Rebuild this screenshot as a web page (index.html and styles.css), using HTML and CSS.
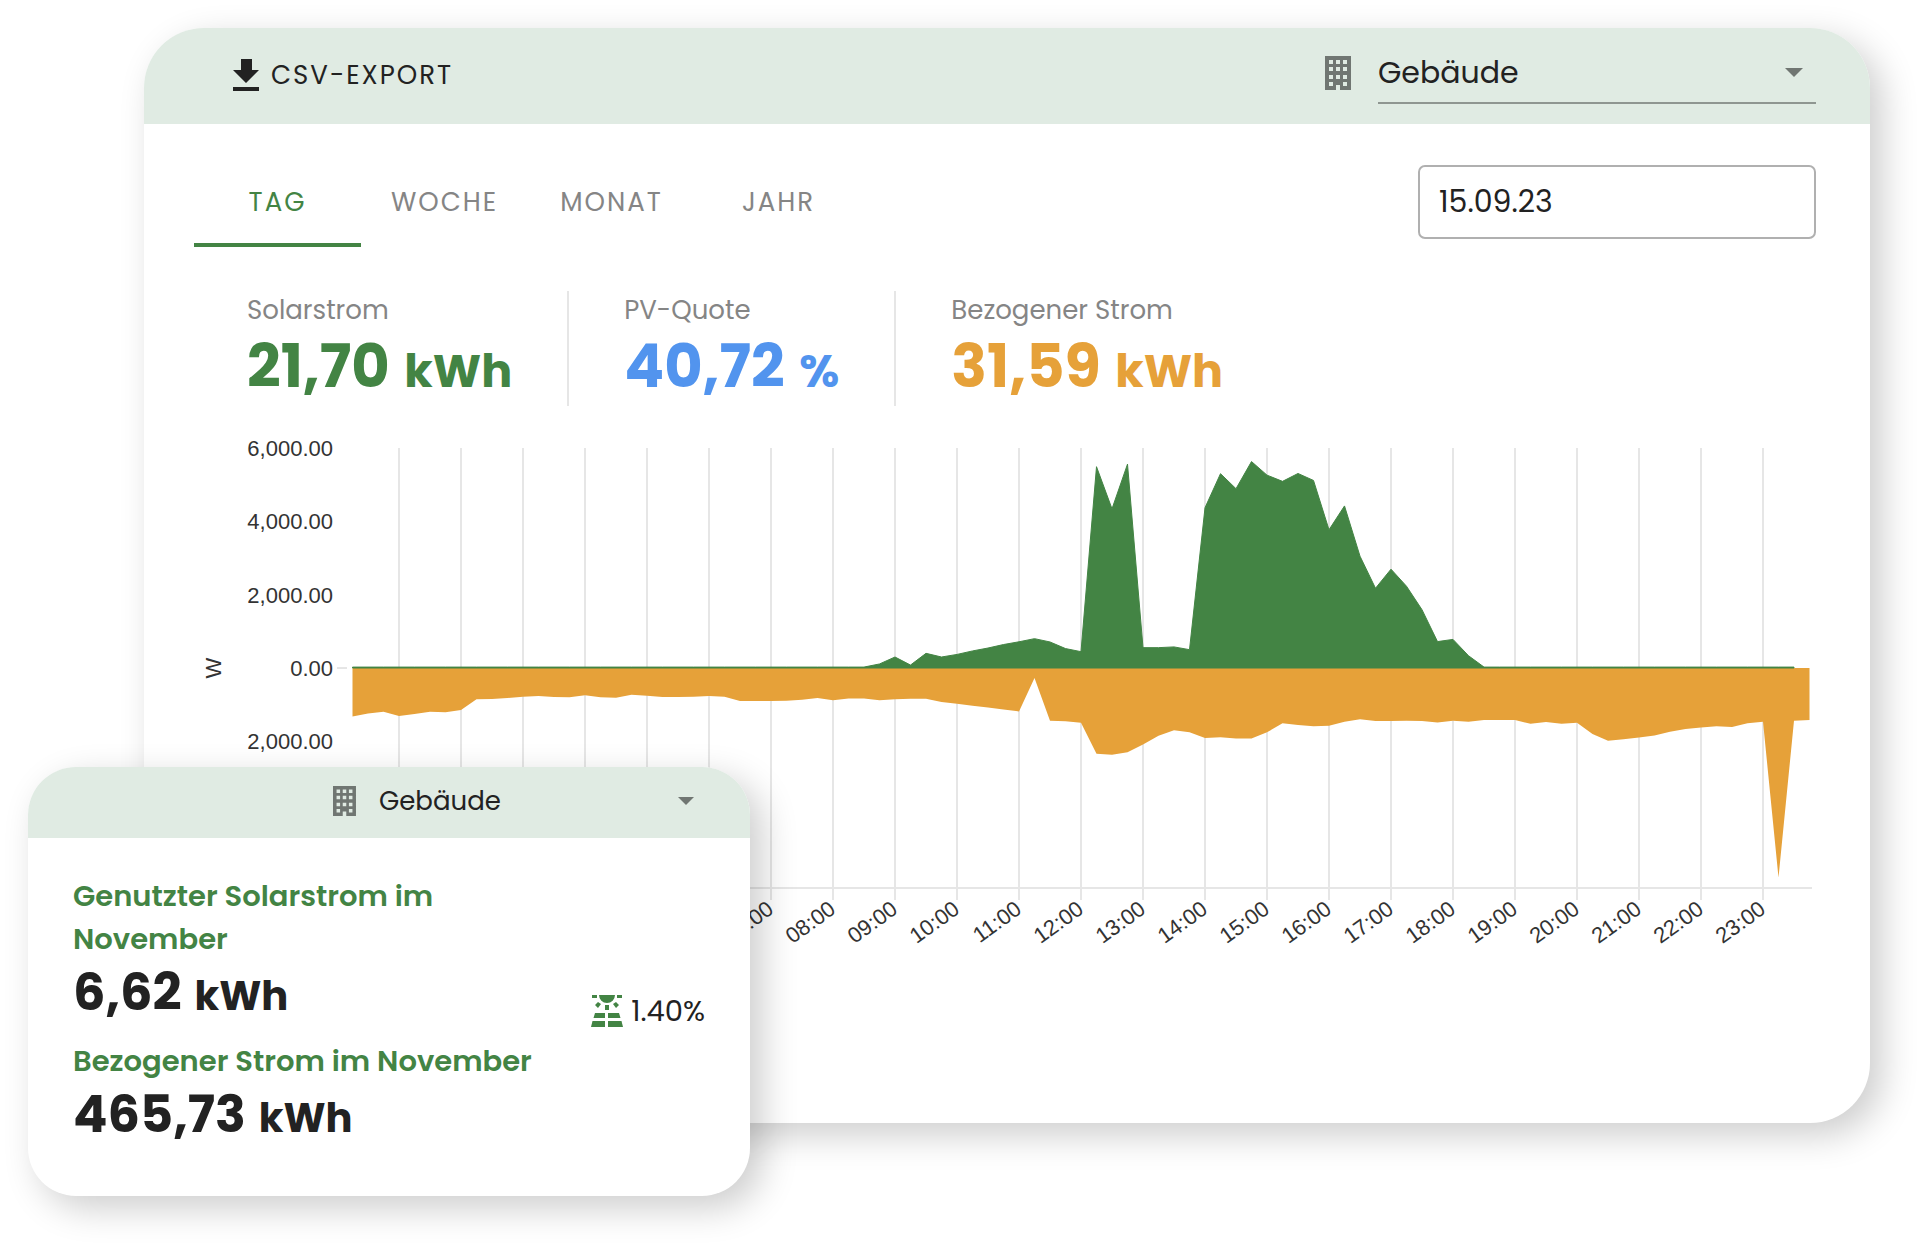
FILE: index.html
```html
<!DOCTYPE html>
<html lang="de">
<head>
  <meta charset="UTF-8" />
  <meta name="viewport" content="width=device-width, initial-scale=1.0" />
  <title>Stromverbrauch</title>
  <link rel="stylesheet" href="styles.css">
</head>
<body>
  <!-- shared icon shapes -->
  <svg class="icon-defs" aria-hidden="true">
    <symbol id="icon-building" viewBox="0 0 26 34">
      <path fill-rule="evenodd" d="M0 0h26v34H15v-5h-4v5H0zM4 4v4h4V4zm7 0v4h4V4zm7 0v4h4V4zM4 11v4h4v-4zm7 0v4h4v-4zm7 0v4h4v-4zM4 19v4h4v-4zm7 0v4h4v-4zm7 0v4h4v-4zM4 26v4h4v-4zm14 0v4h4v-4z" />
    </symbol>
  </svg>

  <main class="stage">
    <section class="card">
      <header class="card-header">
        <button class="export-btn" type="button">
          <svg class="icon-download" viewBox="0 0 26 32" aria-hidden="true">
            <path d="M8 0h11v11h7L13 24 0 11h8zM0 28h26v4H0z" />
          </svg>
          CSV-EXPORT
        </button>

        <div class="picker">
          <svg class="icon-building" aria-hidden="true"><use href="#icon-building" /></svg>
          <div class="select-wrap underlined">
            <select id="building" aria-label="Gebäude">
              <option>Gebäude</option>
            </select>
            <svg class="caret" viewBox="0 0 18 9" aria-hidden="true"><path d="M0 0h18L9 9z" /></svg>
          </div>
        </div>
      </header>

      <div class="card-body">
        <div class="toolbar">
          <div class="tabs" role="tablist">
            <button class="tab active" type="button" role="tab" aria-selected="true">TAG</button>
            <button class="tab" type="button" role="tab" aria-selected="false">WOCHE</button>
            <button class="tab" type="button" role="tab" aria-selected="false">MONAT</button>
            <button class="tab" type="button" role="tab" aria-selected="false">JAHR</button>
          </div>
          <input class="date-field" type="text" value="15.09.23" aria-label="Datum">
        </div>

        <div class="stats">
          <div class="stat green">
            <div class="stat-label">Solarstrom</div>
            <div class="stat-value">21,70 <span class="unit">kWh</span></div>
          </div>
          <div class="stat blue">
            <div class="stat-label">PV-Quote</div>
            <div class="stat-value">40,72 <span class="unit">%</span></div>
          </div>
          <div class="stat orange">
            <div class="stat-label">Bezogener Strom</div>
            <div class="stat-value">31,59 <span class="unit">kWh</span></div>
          </div>
        </div>

        <svg id="chart" class="chart" viewBox="0 0 1622 530" role="img" aria-label="Leistung in W"></svg>
      </div>
    </section>

    <section class="card summary">
      <header class="card-header">
        <div class="picker">
          <svg class="icon-building" aria-hidden="true"><use href="#icon-building" /></svg>
          <div class="select-wrap">
            <select id="summary-building" aria-label="Gebäude">
              <option>Gebäude</option>
            </select>
            <svg class="caret" viewBox="0 0 18 9" aria-hidden="true"><path d="M0 0h18L9 9z" /></svg>
          </div>
        </div>
      </header>

      <div class="summary-body">
        <div class="totals">
          <h3>Genutzter Solarstrom im November</h3>
          <p class="total">6,62 <span class="unit">kWh</span></p>
          <h3>Bezogener Strom im November</h3>
          <p class="total">465,73 <span class="unit">kWh</span></p>
        </div>
        <div class="share">
          <svg class="icon-solar" viewBox="0 0 32 32" aria-hidden="true">
            <path d="M8 0h16a8 8 0 0 1-16 0zM1 0h5v3H1zM26 0h5v3h-5zM14 10h4v5h-4zM4 10l3-3 3 2-3 4zM28 10l-3-3-3 2 3 4zM4 18h10v5H2.500zM17 18h11l1.500 5H17zM1.500 26H14v6H0zM17 26h13.500l1.500 6H17z" />
          </svg>
          1.40%
        </div>
      </div>
    </section>
  </main>

  <script>
    // Quarter-hour readings in W, first one at 00:15
    const solar = [
      ...Array(33).fill(25),
      25, 110, 300, 80, 400, 300, 370, 465, 545, 640, 715, 800, 710, 530,
      445, 5490, 4340, 5560, 555, 555, 575, 500, 4370, 5300, 4890, 5630,
      5260, 5090, 5305, 5115, 3770, 4420, 3050, 2175, 2695, 2230, 1590, 720,
      780, 335, ...Array(21).fill(25)
    ];

    const grid = [
      1320, 1240, 1190, 1310, 1255, 1190, 1210, 1145, 855, 845, 820, 785,
      765, 790, 800, 745, 800, 810, 728, 755, 790, 790, 785, 765, 785, 900,
      900, 900, 890, 865, 820, 880, 830, 830, 880, 855, 840, 840, 930, 975,
      1030, 1075, 1130, 1185, 270, 1440, 1455, 1490, 2340, 2365, 2300, 2085,
      1850, 1700, 1755, 1910, 1890, 1920, 1920, 1755, 1510, 1555, 1590, 1575,
      1465, 1400, 1445, 1445, 1438, 1445, 1483, 1438, 1465, 1420, 1420, 1420,
      1520, 1475, 1520, 1490, 1800, 1985, 1940, 1893, 1838, 1738, 1665, 1620,
      1592, 1610, 1510, 1465, 5716, 1438, 1420
    ];

    const chart = document.getElementById("chart");
    const zero = 238;
    const hourWidth = 62;
    const yScale = 220 / 6000;
    const xAt = hour => 143 + hour * hourWidth;

    function add(tag, attrs, text) {
      const el = document.createElementNS("http://www.w3.org/2000/svg", tag);
      Object.keys(attrs).forEach(key => el.setAttribute(key, attrs[key]));
      if (text) el.textContent = text;
      chart.appendChild(el);
    }

    function area(values, sign, cls) {
      const points = values.map((v, i) => `${xAt((i + 1) / 4)},${zero - sign * v * yScale}`);
      points.unshift(`${xAt(0.25)},${zero}`);
      points.push(`${xAt(values.length / 4)},${zero}`);
      add("polygon", { points: points.join(" "), class: cls });
    }

    // Grid lines and hour labels
    for (let hour = 1; hour < 24; hour++) {
      const x = xAt(hour);
      add("line", { x1: x, x2: x, y1: 18, y2: 470, class: "grid-line" });
      add("text", {
        transform: `translate(${x + 4} 482) rotate(-36)`,
        class: "axis-label"
      }, `${String(hour).padStart(2, "0")}:00`);
    }
    add("line", { x1: 157, x2: 1618, y1: 458, y2: 458, class: "grid-line" });
    add("line", { x1: 143, x2: 153, y1: zero, y2: zero, class: "zero-tick" });

    // The summary card covers the axis below -2000
    for (let v = 6000; v >= -2000; v -= 2000) {
      const label = Math.abs(v).toLocaleString("en-US", { minimumFractionDigits: 2 });
      add("text", { x: 139, y: zero - v * yScale + 8, class: "axis-label" }, label);
    }
    add("text", { transform: `translate(27 ${zero}) rotate(-90)`, class: "axis-title" }, "W");

    area(grid, -1, "area-grid");
    area(solar, 1, "area-solar");

    // Tabs
    const tabs = document.querySelectorAll(".tab");
    tabs.forEach(tab => {
      tab.onclick = () => {
        tabs.forEach(t => {
          t.classList.toggle("active", t === tab);
          t.setAttribute("aria-selected", t === tab);
        });
      };
    });
  </script>
</body>
</html>
```

FILE: styles.css
```css
* {
  box-sizing: border-box;
}

body {
  margin: 0;
  background: #fff;
  color: #222;
  font-family: Poppins, Inter, sans-serif;
  font-size: 26px;
}

button,
select,
input {
  font-family: inherit;
  color: inherit;
}

.icon-defs {
  display: none;
}

.stage {
  position: relative;
  padding: 28px 56px 129px 144px;
}

.card {
  background: #fff;
  border-radius: 60px;
  box-shadow: 12px 12px 36px rgba(0, 0, 0, 0.2);
  overflow: hidden;
}

.card-header {
  display: flex;
  justify-content: space-between;
  align-items: center;
  height: 96px;
  padding: 0 54px 0 89px;
  background: #e0ebe3;
}

.export-btn {
  display: flex;
  align-items: center;
  gap: 12px;
  padding: 0 0 2px;
  border: none;
  background: none;
  font-size: 26px;
  letter-spacing: 2px;
  cursor: pointer;
}

.icon-download {
  width: 26px;
  height: 32px;
  fill: #222;
}

/* Building picker */
.picker {
  display: flex;
  align-items: center;
  gap: 27px;
  margin-bottom: 6px;
}

.icon-building {
  width: 26px;
  height: 34px;
  fill: #707672;
}

.select-wrap {
  display: flex;
  align-items: center;
  position: relative;
}

.underlined {
  width: 438px;
  height: 62px;
  border-bottom: 2px solid #8f9691;
}

.select-wrap select {
  width: 100%;
  padding: 0;
  border: none;
  outline: none;
  appearance: none;
  background: none;
  font-size: 30px;
}

.caret {
  position: absolute;
  right: 13px;
  width: 18px;
  height: 9px;
  fill: #707672;
  pointer-events: none;
}

/* Main card */
.card-body {
  padding: 32px 54px 163px 50px;
}

.toolbar {
  display: flex;
  justify-content: space-between;
  align-items: center;
}

.tabs {
  display: flex;
}

.tab {
  width: 167px;
  height: 91px;
  padding: 6px 0 0;
  border: none;
  border-bottom: 4px solid transparent;
  background: none;
  color: #858585;
  font-size: 26px;
  letter-spacing: 2px;
  cursor: pointer;
}

.tab.active {
  border-color: #438444;
  color: #438444;
}

.date-field {
  width: 398px;
  height: 74px;
  padding: 0 19px;
  border: 2px solid #b0b0b0;
  border-radius: 7px;
  background: #fff;
  font-size: 30px;
}

.stats {
  display: flex;
  margin-top: 44px;
}

.stat {
  height: 115px;
  padding: 0 55px;
  border-left: 2px solid #e6e6e6;
}

.stat:first-child {
  padding-left: 53px;
  border-left: none;
}

.stat-label {
  color: #858585;
  line-height: 38px;
}

.stat-value {
  font-size: 59px;
  font-weight: 700;
  line-height: 76px;
}

.unit {
  margin-left: 2px;
  line-height: 1;
}

.stat-value .unit {
  font-size: 46px;
}

.green .stat-value {
  color: #438444;
}

.blue .stat-value {
  color: #5294ee;
}

.orange .stat-value {
  color: #e6a139;
}

/* Chart */
.chart {
  display: block;
  width: 100%;
  margin-top: 24px;
  font-family: Helvetica, "Liberation Sans", sans-serif;
  font-size: 22px;
}

.grid-line {
  stroke: #e6e6e6;
  stroke-width: 2;
}

.zero-tick {
  stroke: #ccc;
}

.axis-label {
  fill: #333;
  text-anchor: end;
}

.axis-title {
  fill: #333;
  text-anchor: middle;
}

.area-grid {
  fill: #e6a139;
}

.area-solar {
  fill: #438444;
  stroke: #438444;
}

/* Summary card, floats over the lower left corner */
.summary {
  position: absolute;
  left: 28px;
  bottom: 56px;
  width: 722px;
  border-radius: 48px;
}

.summary .card-header {
  height: 71px;
  padding: 0 43px;
  justify-content: flex-end;
}

.summary .picker {
  gap: 23px;
  margin-bottom: 4px;
}

.summary .icon-building {
  width: 23px;
  height: 30px;
}

.summary .select-wrap {
  width: 328px;
}

.summary select {
  font-size: 26px;
}

.summary .caret {
  width: 16px;
  height: 8px;
}

.summary-body {
  display: flex;
  justify-content: space-between;
  align-items: center;
  padding: 37px 45px 51px;
}

.totals {
  max-width: 480px;
}

.totals h3 {
  margin: 0;
  color: #438444;
  font-size: 29px;
  font-weight: 600;
  line-height: 43px;
}

.total {
  margin: 0;
  font-size: 51px;
  font-weight: 700;
  line-height: 62px;
}

.totals p + h3 {
  margin-top: 17px;
}

.total .unit {
  font-size: 40px;
}

.share {
  display: flex;
  align-items: center;
  gap: 8px;
  padding-top: 2px;
  font-size: 29px;
}

.icon-solar {
  width: 32px;
  height: 32px;
  fill: #438444;
}
```
